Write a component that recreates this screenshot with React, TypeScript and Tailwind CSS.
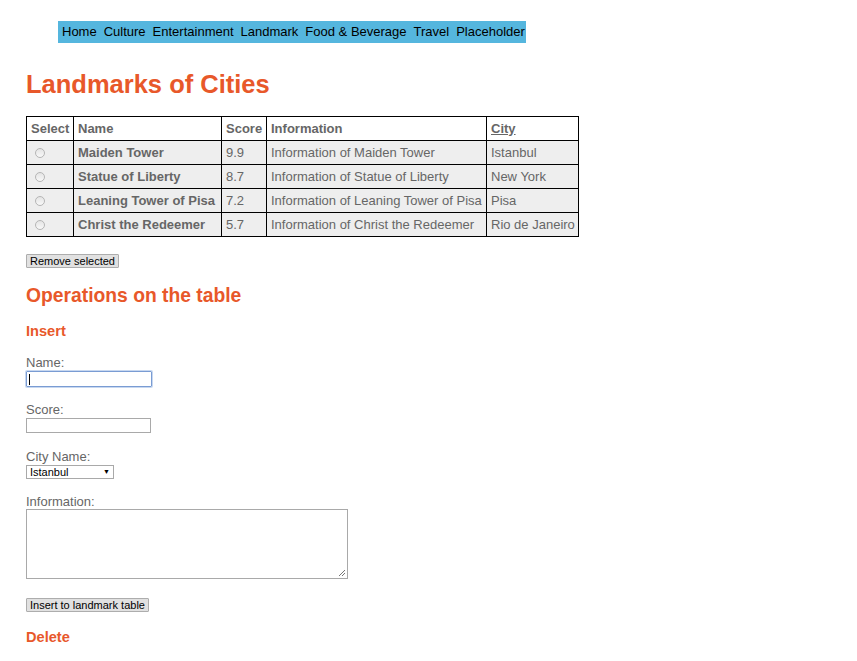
import React from 'react';

const NAV = ['Home', 'Culture', 'Entertainment', 'Landmark', 'Food & Beverage', 'Travel', 'Placeholder'];

const ROWS = [
  { name: 'Maiden Tower', score: '9.9', info: 'Information of Maiden Tower', city: 'Istanbul' },
  { name: 'Statue of Liberty', score: '8.7', info: 'Information of Statue of Liberty', city: 'New York' },
  { name: 'Leaning Tower of Pisa', score: '7.2', info: 'Information of Leaning Tower of Pisa', city: 'Pisa' },
  { name: 'Christ the Redeemer', score: '5.7', info: 'Information of Christ the Redeemer', city: 'Rio de Janeiro' },
];

export default function App() {
  const cell = 'border border-black px-[4px] h-[24px] text-left whitespace-nowrap overflow-hidden';
  const btn =
    'block whitespace-nowrap bg-[#e1e1e1] border border-[#adadad] text-black text-[11px] leading-[12px] px-[3px] py-0 h-[14px] rounded-[1px]';
  const label = 'block text-[13px] leading-[15px] text-[#666]';
  return (
    <div className="min-h-screen bg-white px-[26px] pt-[21px] pb-4" style={{ fontFamily: '"Liberation Sans", Arial, sans-serif' }}>
      <nav className="ml-[32px] w-[468px] h-[22px] bg-[#55b6de] flex items-center gap-[7px] px-[4px] text-[13px] text-black whitespace-nowrap overflow-hidden">
        {NAV.map((n) => (
          <span key={n}>{n}</span>
        ))}
      </nav>

      <h1 className="text-[25.5px] leading-[30px] font-bold text-[#e8582a] mt-[26px]">Landmarks of Cities</h1>

      <table className="mt-[17px] border-collapse table-fixed w-[552px] text-[13px] text-[#666]">
        <colgroup>
          <col className="w-[47px]" />
          <col className="w-[148px]" />
          <col className="w-[45px]" />
          <col className="w-[220px]" />
          <col className="w-[92px]" />
        </colgroup>
        <thead>
          <tr className="bg-white font-bold">
            <th className={cell}>Select</th>
            <th className={cell}>Name</th>
            <th className={cell}>Score</th>
            <th className={cell}>Information</th>
            <th className={cell}>
              <span className="underline">City</span>
            </th>
          </tr>
        </thead>
        <tbody>
          {ROWS.map((r) => (
            <tr key={r.name} className="bg-[#eeeeee]">
              <td className={cell + ' pl-[8px]'}>
                <span className="block w-[10px] h-[10px] rounded-full border border-[#b5b5b5] bg-gradient-to-b from-[#e4e4e4] to-[#f8f8f8]" />
              </td>
              <td className={cell + ' font-bold'}>{r.name}</td>
              <td className={cell}>{r.score}</td>
              <td className={cell}>{r.info}</td>
              <td className={cell}>{r.city}</td>
            </tr>
          ))}
        </tbody>
      </table>

      <button className={btn + ' mt-[17px]'}>Remove selected</button>

      <h2 className="text-[19.3px] leading-[24px] font-bold text-[#e8582a] mt-[16px]">Operations on the table</h2>

      <h3 className="text-[14.6px] leading-[18px] font-bold text-[#e8582a] mt-[14px]">Insert</h3>

      <label className={label + ' mt-[15px]'}>Name:</label>
      <div className="mt-[1px] w-[126px] h-[16px] border border-[#7a9cd3] rounded-[1px] shadow-[0_0_0_1px_#c8d8f0] flex items-center pl-[2px]">
        <span className="w-[1px] h-[11px] bg-black" />
      </div>

      <label className={label + ' mt-[15px]'}>Score:</label>
      <div className="mt-[1px] w-[125px] h-[15px] border border-[#a9a9a9]" />

      <label className={label + ' mt-[16px]'}>City Name:</label>
      <div className="mt-[1px] w-[88px] h-[14px] border border-[#a9a9a9] flex items-center justify-between px-[3px] text-[11px] text-black leading-[12px]">
        <span>Istanbul</span>
        <span className="text-[7px]">▼</span>
      </div>

      <label className={label + ' mt-[15px]'}>Information:</label>
      <div className="relative w-[322px] h-[70px] border border-[#a9a9a9]">
        <svg className="absolute right-[1px] bottom-[1px]" width="8" height="8" viewBox="0 0 8 8">
          <path d="M7 1 L1 7 M7 4 L4 7" stroke="#777" strokeWidth="1" />
        </svg>
      </div>

      <button className={btn + ' mt-[19px]'}>Insert to landmark table</button>

      <h3 className="text-[14.6px] leading-[18px] font-bold text-[#e8582a] mt-[16px]">Delete</h3>
    </div>
  );
}
